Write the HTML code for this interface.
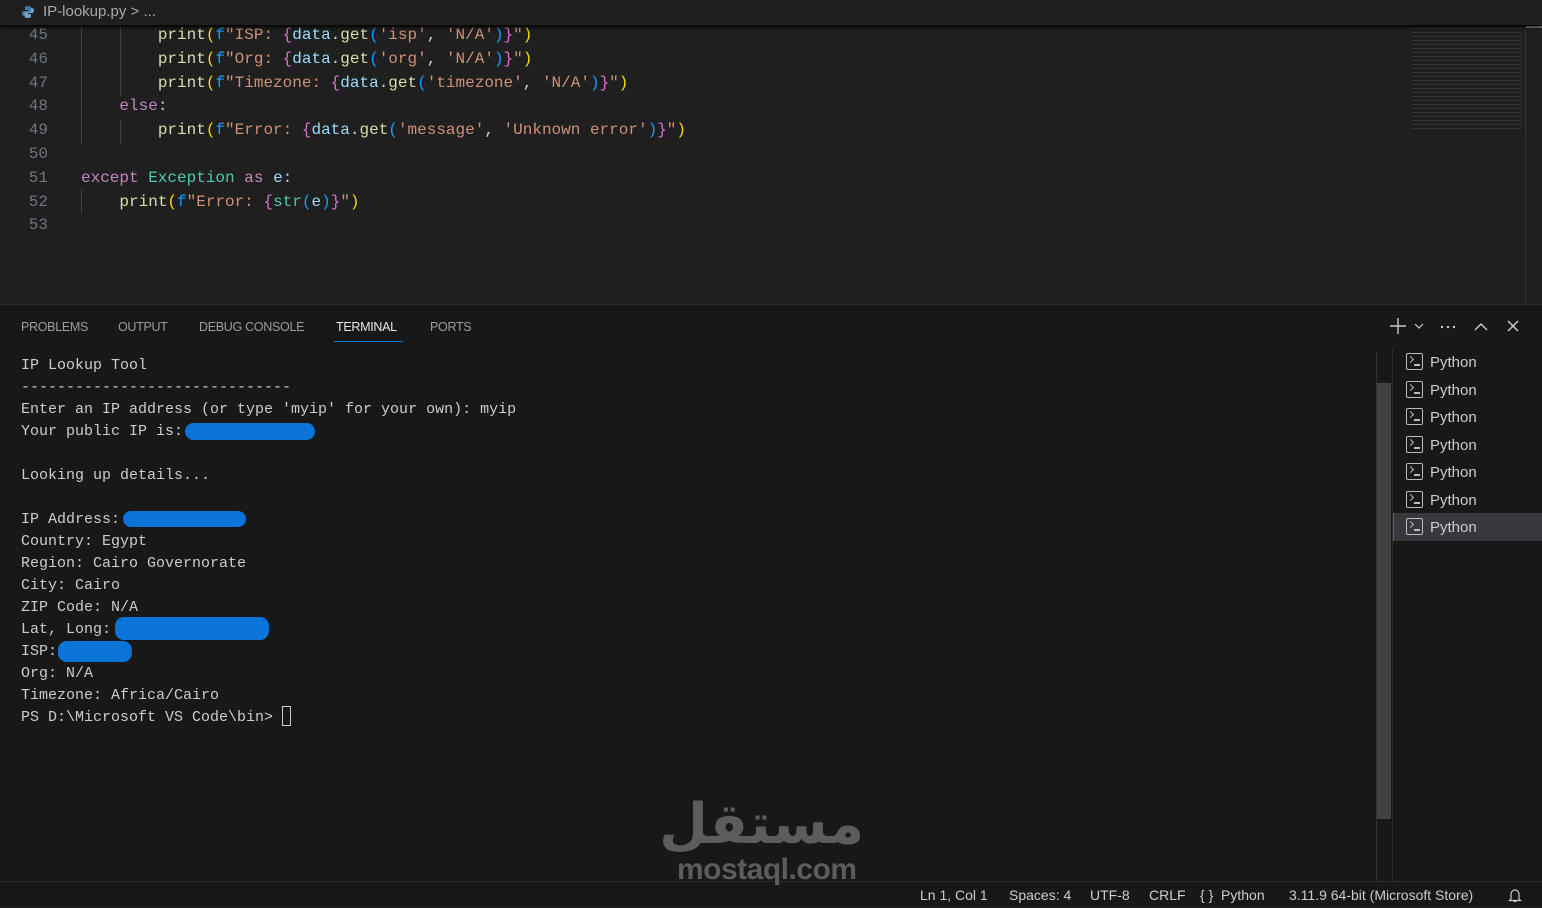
<!DOCTYPE html>
<html><head><meta charset="utf-8"><style>
*{margin:0;padding:0;box-sizing:border-box}
body{width:1542px;height:906px;background:#1f1f1f;position:relative;overflow:hidden;font-family:"Liberation Sans",sans-serif;color:#ccc}
.abs{position:absolute}
.bc{top:0;left:0;width:1542px;height:25px;background:#1f1f1f;box-shadow:0 2px 4px #000;font-size:15px;color:#a9a9a9;line-height:24px;padding-left:43px;z-index:2}
.code{font-family:"Liberation Mono",monospace;font-size:16px;white-space:pre}
.ln{left:0;width:48px;text-align:right;color:#6e7681}
.line{left:81px}
.k{color:#c586c0}.f{color:#dcdcaa}.s{color:#ce9178}.v{color:#9cdcfe}.c{color:#4ec9b0}.y{color:#ffd700}.p{color:#da70d6}.b{color:#179fff}.w{color:#ccc}
.guide{width:1px;background:#404040}
.panel{top:304px;left:0;width:1542px;height:577px;background:#181818;border-top:1px solid #2b2b2b}
.tab{top:320px;font-size:12.5px;color:#9d9d9d;letter-spacing:-0.3px}
.term{font-family:"Liberation Mono",monospace;font-size:15px;color:#cccccc;white-space:pre;line-height:22px;left:21px;top:355px}
.blob{background:#0a74d8;border-radius:9px}
.tl{left:1406px;font-size:15px;color:#ccc}
.ico{display:inline-block;width:17px;height:17px;border:1.5px solid #bbb;border-radius:2px;vertical-align:-3px;margin-right:7px;position:relative}
.ico:before{content:"";position:absolute;left:1px;top:3px;width:4px;height:4px;border-right:1.5px solid #bbb;border-bottom:1.5px solid #bbb;transform:rotate(-45deg)}
.ico:after{content:"";position:absolute;left:7px;top:10px;width:6px;height:1.5px;background:#bbb}
.status{top:881px;left:0;width:1542px;height:25px;background:#181818;border-top:1px solid #2b2b2b;font-size:14px;color:#ccc;line-height:26px}
</style></head><body>
<div class="abs bc"><svg style="position:absolute;left:21px;top:5px" width="14" height="14" viewBox="0 0 14 14"><path d="M7 1C4 1 4 2 4 3v2h3v1H2.5C1 6 1 7.5 1 8.5S1.5 11 3 11h1V9c0-1 1-2 2-2h3c1 0 1.5-.5 1.5-1.5V3C10.5 1.5 9 1 7 1z" fill="#3c78aa"/><path d="M7 13c3 0 3-1 3-2V9H7V8h4.5C13 8 13 6.5 13 5.5S12.5 3 11 3h-1v2c0 1-1 2-2 2H5C4 7 3.5 7.5 3.5 8.5V11c0 1.5 1.5 2 3.5 2z" fill="#6ea0c8"/></svg>IP-lookup.py &gt; ...</div>

<div class="abs guide" style="left:81px;top:24px;height:120px"></div>
<div class="abs guide" style="left:120px;top:24px;height:72px"></div>
<div class="abs guide" style="left:120px;top:120px;height:24px"></div>
<div class="abs guide" style="left:81px;top:190px;height:24px"></div>

<div class="abs code ln" style="top:24px;line-height:23.8px">45
46
47
48
49
50
51
52
53</div>
<div class="abs code line" style="top:24px;line-height:23.8px"><span>        <span class="f">print</span><span class="y">(</span><span class="b">f</span><span class="s">"ISP: </span><span class="p">{</span><span class="v">data</span><span class="w">.</span><span class="f">get</span><span class="b">(</span><span class="s">'isp'</span><span class="w">, </span><span class="s">'N/A'</span><span class="b">)</span><span class="p">}</span><span class="s">"</span><span class="y">)</span></span>
        <span class="f">print</span><span class="y">(</span><span class="b">f</span><span class="s">"Org: </span><span class="p">{</span><span class="v">data</span><span class="w">.</span><span class="f">get</span><span class="b">(</span><span class="s">'org'</span><span class="w">, </span><span class="s">'N/A'</span><span class="b">)</span><span class="p">}</span><span class="s">"</span><span class="y">)</span>
        <span class="f">print</span><span class="y">(</span><span class="b">f</span><span class="s">"Timezone: </span><span class="p">{</span><span class="v">data</span><span class="w">.</span><span class="f">get</span><span class="b">(</span><span class="s">'timezone'</span><span class="w">, </span><span class="s">'N/A'</span><span class="b">)</span><span class="p">}</span><span class="s">"</span><span class="y">)</span>
    <span class="k">else</span><span class="w">:</span>
        <span class="f">print</span><span class="y">(</span><span class="b">f</span><span class="s">"Error: </span><span class="p">{</span><span class="v">data</span><span class="w">.</span><span class="f">get</span><span class="b">(</span><span class="s">'message'</span><span class="w">, </span><span class="s">'Unknown error'</span><span class="b">)</span><span class="p">}</span><span class="s">"</span><span class="y">)</span>

<span class="k">except</span> <span class="c">Exception</span> <span class="k">as</span> <span class="v">e</span><span class="w">:</span>
    <span class="f">print</span><span class="y">(</span><span class="b">f</span><span class="s">"Error: </span><span class="p">{</span><span class="c">str</span><span class="b">(</span><span class="v">e</span><span class="b">)</span><span class="p">}</span><span class="s">"</span><span class="y">)</span></div>

<div class="abs" style="left:1412px;top:26px;width:110px;height:105px;opacity:.45;background:repeating-linear-gradient(#1f1f1f 0 2px,#4a4a4a 2px 3px,#1f1f1f 3px 4px)"></div>
<div class="abs" style="left:1525px;top:26px;width:1px;height:278px;background:#333"></div>
<div class="abs" style="left:1526px;top:26px;width:16px;height:2px;background:#999"></div>

<div class="abs panel"></div>
<div class="abs tab" style="left:21px">PROBLEMS</div>
<div class="abs tab" style="left:118px">OUTPUT</div>
<div class="abs tab" style="left:199px">DEBUG CONSOLE</div>
<div class="abs tab" style="left:336px;color:#e7e7e7">TERMINAL</div>
<div class="abs" style="left:334px;top:341px;width:69px;height:1px;background:#0078d4"></div>
<div class="abs tab" style="left:430px">PORTS</div>
<svg class="abs" style="left:1388px;top:316px" width="140" height="20" viewBox="0 0 140 20">
<path d="M10 2v16M2 10h16" stroke="#ccc" stroke-width="1.4"/>
<path d="M27 8l4 4 4-4" stroke="#ccc" stroke-width="1.2" fill="none"/>
<circle cx="54" cy="11" r="1.2" fill="#ccc"/><circle cx="60" cy="11" r="1.2" fill="#ccc"/><circle cx="66" cy="11" r="1.2" fill="#ccc"/>
<path d="M87 14l6-6 6 6" stroke="#ccc" stroke-width="1.4" fill="none"/>
<path d="M120 5l10 10M130 5l-10 10" stroke="#ccc" stroke-width="1.5"/>
</svg>

<div class="abs term">IP Lookup Tool
------------------------------
Enter an IP address (or type 'myip' for your own): myip
Your public IP is:

Looking up details...

IP Address:
Country: Egypt
Region: Cairo Governorate
City: Cairo
ZIP Code: N/A
Lat, Long:
ISP:
Org: N/A
Timezone: Africa/Cairo
PS D:\Microsoft VS Code\bin> </div>
<div class="abs" style="left:282px;top:706px;width:9px;height:20px;border:1px solid #ccc"></div>
<div class="abs blob" style="left:185px;top:423px;width:130px;height:17px"></div>
<div class="abs blob" style="left:123px;top:511px;width:123px;height:16px"></div>
<div class="abs blob" style="left:115px;top:617px;width:154px;height:23px"></div>
<div class="abs blob" style="left:58px;top:641px;width:74px;height:21px"></div>

<div class="abs" style="left:1376px;top:352px;width:16px;height:529px;border-left:1px solid #333"></div>
<div class="abs" style="left:1377px;top:383px;width:14px;height:436px;background:#424242"></div>
<div class="abs" style="left:1392px;top:348px;width:1px;height:533px;background:#2b2b2b"></div>
<div class="abs" style="left:1393px;top:513px;width:149px;height:28px;background:#37373d;border-left:1px solid #0078d4"></div>
<div class="abs tl" style="top:353px"><span class="ico"></span>Python</div>
<div class="abs tl" style="top:381px"><span class="ico"></span>Python</div>
<div class="abs tl" style="top:408px"><span class="ico"></span>Python</div>
<div class="abs tl" style="top:436px"><span class="ico"></span>Python</div>
<div class="abs tl" style="top:463px"><span class="ico"></span>Python</div>
<div class="abs tl" style="top:491px"><span class="ico"></span>Python</div>
<div class="abs tl" style="top:518px"><span class="ico"></span>Python</div>

<div class="abs" style="left:678px;top:790px;width:186px;font-family:'DejaVu Sans',sans-serif;font-size:56px;font-weight:bold;color:#5c5c5c;direction:rtl;text-align:center;line-height:70px">مستقل</div>

<div class="abs status"><span style="position:absolute;left:920px">Ln 1, Col 1</span><span style="position:absolute;left:1009px">Spaces: 4</span><span style="position:absolute;left:1090px">UTF-8</span><span style="position:absolute;left:1149px">CRLF</span><span style="position:absolute;left:1200px">{ }&nbsp; Python</span><span style="position:absolute;left:1289px">3.11.9 64-bit (Microsoft Store)</span>
<svg style="position:absolute;left:1507px;top:5px" width="16" height="16" viewBox="0 0 16 16"><path d="M4 12V7a4 4 0 0 1 8 0v5l1.5 1.5h-11zM6.5 14.5h3" stroke="#ccc" stroke-width="1.2" fill="none"/></svg></div>
<div class="abs" style="left:677px;top:853px;font-size:30px;font-weight:bold;color:#5c5c5c;z-index:3;letter-spacing:-0.5px">mostaql.com</div>
</body></html>
